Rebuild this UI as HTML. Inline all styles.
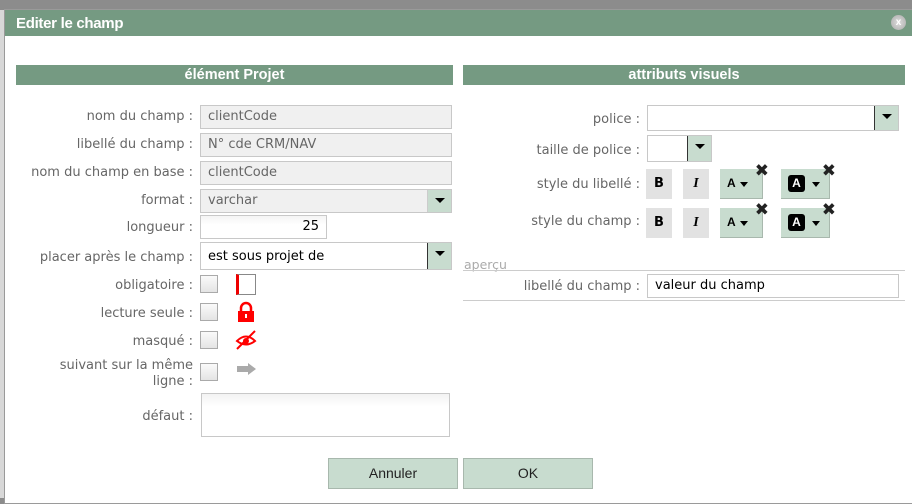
<!DOCTYPE html>
<html><head><meta charset="utf-8"><style>
*{box-sizing:border-box;margin:0;padding:0}
body{width:912px;height:498px;overflow:hidden;background:#8c8c8c;position:relative;font-family:"DejaVu Sans","Liberation Sans",sans-serif;font-size:13px;color:#666}
.a{position:absolute}
#left{left:0;top:10px;width:5px;height:488px;background:#d8d8d8}
#dlg{left:4px;top:9px;width:912px;height:495px;background:#fff;border:1px solid #9a9a9a}
#tb{left:5px;top:10px;width:907px;height:26px;background:#759a82;color:#fff;font:bold 15px "Liberation Sans",sans-serif;padding:5px 0 0 11px;letter-spacing:-.3px}
.hd{height:20px;background:#759a82;color:#fff;font:bold 14.5px/20px "Liberation Sans",sans-serif;text-align:center}
.lb{text-align:right;white-space:nowrap}
.in{background:#f0f0f0;border:1px solid #c8c8c8;color:#666;padding:3px 7px;font-size:13px;height:24px;line-height:16px}
.w{background:#fff;color:#000}
.arr{position:absolute;right:0;top:0;width:24px;height:100%;background:#c8dccf;border-left:1px solid #333}
.arr:after{content:"";position:absolute;left:7px;top:8px;border:5px solid transparent;border-top:5px solid #000;border-bottom:0}
.cb{width:18px;height:18px;border:1px solid #aaa;background:linear-gradient(#fafafa,#e4e4e4)}
.sb{width:26px;height:30px;background:#e2e2e2;color:#000;text-align:center;line-height:30px}
.cl{height:30px;background:#c8dccf;border:1px solid #a8b8ad;border-top:0;border-left:0}
.x{position:absolute;right:-7px;top:-8px;font:bold 17px "DejaVu Sans",sans-serif;color:#222}
.btn{height:31px;background:#c8dccf;border:1px solid #a8b8ad;color:#222;text-align:center;font:14px/29px "Liberation Sans",sans-serif}
</style></head><body>
<div class="a" id="left"></div>
<div class="a" id="dlg"></div>
<div class="a" id="tb">Editer le champ</div>
<div class="a" style="left:891px;top:15px;width:15px;height:15px;border-radius:50%;background:radial-gradient(#ddd,#aaa);color:#fff;font:bold 10px sans-serif;text-align:center;line-height:15px">x</div>

<div class="a hd" style="left:16px;top:65px;width:437px">élément Projet</div>
<div class="a hd" style="left:463px;top:65px;width:442px">attributs visuels</div>

<div class="a lb" style="right:719px;top:109px">nom du champ :</div>
<div class="a in" style="left:200px;top:105px;width:252px">clientCode</div>
<div class="a lb" style="right:719px;top:137px">libellé du champ :</div>
<div class="a in" style="left:200px;top:133px;width:252px">N° cde CRM/NAV</div>
<div class="a lb" style="right:719px;top:165px">nom du champ en base :</div>
<div class="a in" style="left:200px;top:161px;width:252px">clientCode</div>
<div class="a lb" style="right:719px;top:193px">format :</div>
<div class="a in" style="left:200px;top:189px;width:252px">varchar<div class="arr" style="border-left-color:#ccc"></div></div>
<div class="a lb" style="right:719px;top:220px">longueur :</div>
<div class="a in w" style="left:200px;top:215px;width:127px;text-align:right;background:linear-gradient(#f4f4f4,#fff 40%)">25</div>
<div class="a lb" style="right:719px;top:250px">placer après le champ :</div>
<div class="a in w" style="left:200px;top:242px;width:252px;height:28px;padding-top:6px">est sous projet de<div class="arr"></div></div>

<div class="a lb" style="right:719px;top:278px">obligatoire :</div>
<div class="a cb" style="left:200px;top:275px"></div>
<div class="a" style="left:236px;top:274px;width:20px;height:21px;border:1px solid #888;border-left:3px solid #e00"></div>
<div class="a lb" style="right:719px;top:306px">lecture seule :</div>
<div class="a cb" style="left:200px;top:303px"></div>
<svg class="a" style="left:236px;top:301px" width="20" height="22"><path d="M5 10V7a5 5 0 0 1 10 0v3" stroke="#f00" stroke-width="2.5" fill="none"/><rect x="2" y="10" width="16" height="11" fill="#f00"/><rect x="9" y="13" width="2" height="4" fill="#fff"/></svg>
<div class="a lb" style="right:719px;top:334px">masqué :</div>
<div class="a cb" style="left:200px;top:331px"></div>
<svg class="a" style="left:235px;top:329px" width="22" height="22"><path d="M2 12Q11 3 20 12Q11 19 2 12Z" fill="none" stroke="#f00" stroke-width="2"/><circle cx="11" cy="12" r="3" fill="#f00"/><path d="M2 20L20 2" stroke="#f00" stroke-width="2"/></svg>
<div class="a lb" style="right:719px;top:358px;text-align:right;line-height:16px">suivant sur la même<br>ligne :</div>
<div class="a cb" style="left:200px;top:363px"></div>
<svg class="a" style="left:236px;top:362px" width="22" height="14"><path d="M1 4h11V1l8 6-8 6V10H1z" fill="#aaa"/></svg>
<div class="a lb" style="right:719px;top:409px">défaut :</div>
<div class="a" style="left:201px;top:393px;width:249px;height:44px;border:1px solid #c8c8c8;background:linear-gradient(#f2f2f2,#fff 30%)"></div>

<div class="a btn" style="left:328px;top:458px;width:130px">Annuler</div>
<div class="a btn" style="left:463px;top:458px;width:130px">OK</div>

<div class="a lb" style="right:272px;top:112px">police :</div>
<div class="a in w" style="left:647px;top:105px;width:252px;height:26px"><div class="arr"></div></div>
<div class="a lb" style="right:272px;top:143px">taille de police :</div>
<div class="a in w" style="left:647px;top:135px;width:65px;height:27px"><div class="arr"></div></div>

<div class="a lb" style="right:272px;top:177px">style du libellé :</div>
<div class="a sb" style="left:646px;top:169px;font-weight:bold;font-size:13px">B</div>
<div class="a sb" style="left:683px;top:169px;font:italic bold 14px/30px 'Liberation Serif',serif">I</div>
<div class="a cl" style="left:720px;top:169px;width:43px"><span style="position:absolute;left:7px;top:7px;font:bold 12px sans-serif;color:#000">A</span><span style="position:absolute;left:20px;top:13px;border:4px solid transparent;border-top:5px solid #000"></span><span class="x">✖</span></div>
<div class="a cl" style="left:781px;top:169px;width:49px"><span style="position:absolute;left:7px;top:6px;width:17px;height:17px;background:#000;border-radius:3px;color:#fff;font:bold 12px/17px sans-serif;text-align:center">A</span><span style="position:absolute;left:31px;top:13px;border:4px solid transparent;border-top:5px solid #000"></span><span class="x">✖</span></div>

<div class="a lb" style="right:272px;top:214px">style du champ :</div>
<div class="a sb" style="left:646px;top:208px;font-weight:bold;font-size:13px">B</div>
<div class="a sb" style="left:683px;top:208px;font:italic bold 14px/30px 'Liberation Serif',serif">I</div>
<div class="a cl" style="left:720px;top:208px;width:43px"><span style="position:absolute;left:7px;top:7px;font:bold 12px sans-serif;color:#000">A</span><span style="position:absolute;left:20px;top:13px;border:4px solid transparent;border-top:5px solid #000"></span><span class="x">✖</span></div>
<div class="a cl" style="left:781px;top:208px;width:49px"><span style="position:absolute;left:7px;top:6px;width:17px;height:17px;background:#000;border-radius:3px;color:#fff;font:bold 12px/17px sans-serif;text-align:center">A</span><span style="position:absolute;left:31px;top:13px;border:4px solid transparent;border-top:5px solid #000"></span><span class="x">✖</span></div>

<div class="a" style="left:464px;top:257px;color:#aaa;font-size:12.5px">aperçu</div>
<div class="a" style="left:463px;top:270px;width:442px;height:1px;background:#ccc"></div>
<div class="a lb" style="right:272px;top:279px">libellé du champ :</div>
<div class="a in w" style="left:647px;top:274px;width:252px">valeur du champ</div>
<div class="a" style="left:463px;top:300px;width:442px;height:1px;background:#ccc"></div>
</body></html>
